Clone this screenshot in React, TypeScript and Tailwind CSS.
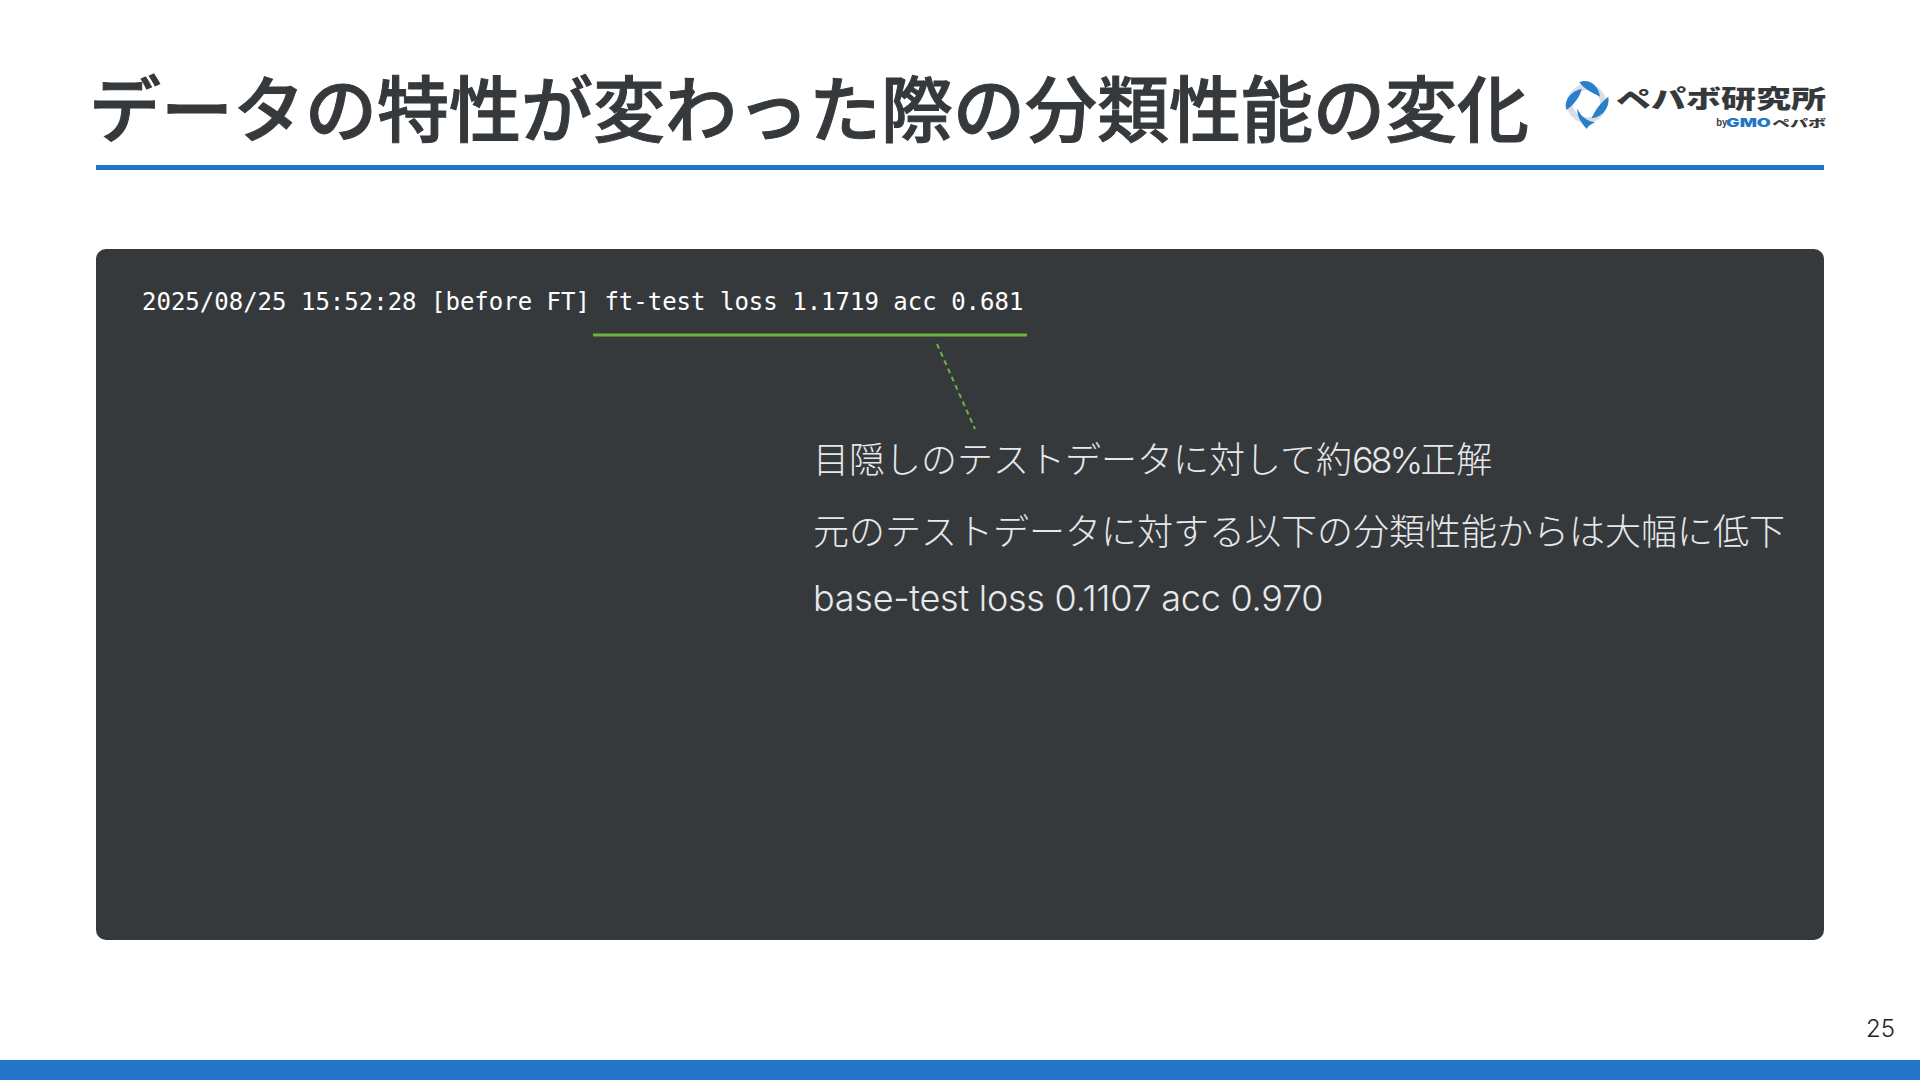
export default function App() {
  return (
    <div className="flex h-[1080px] w-[1920px] flex-col overflow-hidden bg-white font-['Noto_Sans_CJK_JP',sans-serif]">
      <header className="mx-[96px] mt-[50px] flex h-[120px] items-start justify-between border-b-[5px] border-[#2176c7]">
        <h1 className="-ml-[7px] mt-[7px] text-[72px] leading-[96px] font-medium whitespace-nowrap text-[#36393c] [-webkit-text-stroke:1px_#36393c]">データの特性が変わった際の分類性能の変化</h1>
        <div className="-mr-[2px] mt-[25px] flex w-[266px] items-start">
          <svg viewBox="0 0 165 180" className="h-[60px] w-[55px] shrink-0">
            <circle cx="80" cy="86" r="50" fill="none" stroke="#d9dfe4" strokeWidth="18" />
            <path d="M58 22C80 10 115 25 120 65C100 55 75 45 58 22Z" fill="#2a7fca" />
            <path d="M145 65C150 95 130 125 95 130C105 105 120 85 145 65Z" fill="#2a7fca" />
            <path d="M52 100C60 125 85 140 105 142C95 147 85 152 80 162C70 150 50 130 52 100Z" fill="#2a7fca" />
            <path d="M20 105C10 85 25 50 65 42C60 65 45 85 20 105Z" fill="#2a7fca" />
          </svg>
          <div className="flex flex-1 flex-col items-end pt-[7px] text-[#36393c]">
            <div className="origin-right scale-x-[1.4] text-[25px] leading-[30px] font-black whitespace-nowrap">ペパボ研究所</div>
            <div className="mt-[4px] flex h-[14px] items-center justify-end whitespace-nowrap">
              <span className="mr-[14px] text-[9px] leading-[14px] font-bold">by</span>
              <span className="mr-[25px] origin-right scale-x-[1.5] font-['Inter'] text-[12px] leading-[14px] font-black text-[#2176c7]">GMO</span>
              <span className="origin-right scale-x-[1.8] text-[10px] leading-[14px] font-black">ペパボ</span>
            </div>
          </div>
        </div>
      </header>
      <main className="relative mx-[96px] mt-[79px] h-[691px] rounded-[10px] bg-[#36393c] pl-[46px]">
        <div className="pt-[35px] font-['DejaVu_Sans_Mono',monospace] text-[24px] leading-[36px] whitespace-nowrap text-white">
          2025/08/25 15:52:28 [before FT] ft-test loss 1.1719 acc 0.681
        </div>
        <svg className="pointer-events-none absolute top-[80px] left-[497px]" width="440" height="110" fill="none">
          <path d="M0 6H434" stroke="#6db33f" strokeWidth="3" />
          <path d="M344 15L382 100" stroke="#6db33f" strokeWidth="2" strokeDasharray="5 4" />
        </svg>
        <div className="mt-[110px] ml-[671px] font-['Inter','Noto_Sans_CJK_JP',sans-serif] text-[36px] font-light whitespace-nowrap text-[#e6e8ea]">
          <p className="leading-[60px]">目隠しのテストデータに対して約<span className="tracking-[-3px]">68%</span>正解</p>
          <p className="mt-[12px] leading-[60px]">元のテストデータに対する以下の分類性能からは大幅に低下</p>
          <p className="mt-[6px] leading-[60px] tracking-[-0.25px]">base-test loss 0.1107 acc 0.970</p>
        </div>
      </main>
      <footer className="mt-auto">
        <div className="pr-[25px] pb-[16px] text-right font-['Inter',sans-serif] text-[24px] leading-[30px] font-light text-[#222]">25</div>
        <div className="h-[20px] bg-[#2176c7]" />
      </footer>
    </div>
  );
}
